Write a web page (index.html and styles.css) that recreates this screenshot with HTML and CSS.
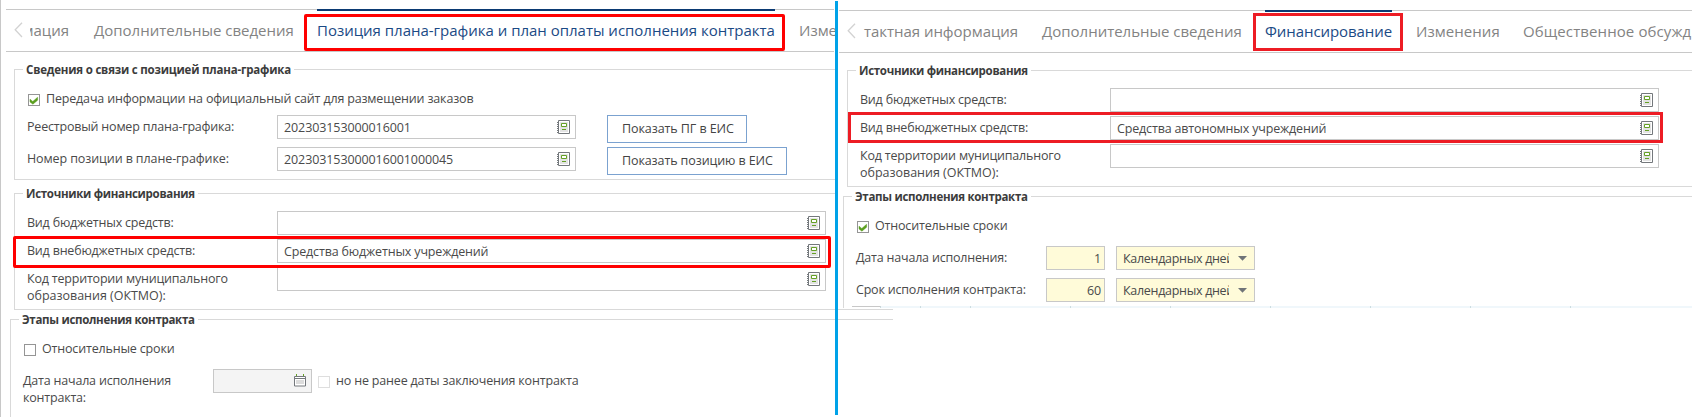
FILE: index.html
```
<!DOCTYPE html>
<html lang="ru">
<head>
<meta charset="utf-8">
<title>Контракт: источники финансирования</title>
<link rel="stylesheet" href="styles.css">
</head>
<body>
<svg class="defs" width="0" height="0" aria-hidden="true">
  <symbol id="book" viewBox="0 0 13 14">
    <path d="M1.5 .5h11v13h-11z" fill="#fff" stroke="#74787c"/>
    <path d="M3 2h8v10H3z" fill="#e3e3e3"/>
    <path d="M0 2h1v1H0zM0 4h1v1H0zM0 6h1v1H0zM0 8h1v1H0zM0 10h1v1H0zM0 12h1v1H0z" fill="#74787c"/>
    <path d="M4.5 3.5h5v3h-5z" fill="#fff" stroke="#64a024"/>
    <path d="M5 9h4v1H5z" fill="#64a024"/>
  </symbol>
  <symbol id="tick" viewBox="0 0 12 12">
    <path d="M2 5.200l2.800 2.300L9.600 3.300v2.900L4.900 10.200 2 7.900z" fill="#5a9e1f" stroke="#5a9e1f" stroke-width=".5"/>
  </symbol>
  <symbol id="back" viewBox="0 0 9 16">
    <path d="M8 .7L1.200 7.800 8 15" fill="none" stroke="#d2d2d2" stroke-width="1.300"/>
  </symbol>
  <symbol id="calendar" viewBox="0 0 12 13">
    <path d="M.5 2.500h11v9.500H.5z" fill="#fff" stroke="#74787c"/>
    <path d="M1 4h10v1H1z" fill="#74787c"/>
    <path d="M2 6h8v4H2z" fill="#dcdcdc"/>
    <path d="M2 0h1v2H2zM9 0h1v2H9z" fill="#64a024"/>
  </symbol>
  <symbol id="caret" viewBox="0 0 9 5"><path d="M0 0h9L4.500 4.800z" fill="#707478"/></symbol>
</svg>

<main class="page">
  <section class="panel panel-left">
    <nav class="tabs">
      <svg class="back"><use href="#back"/></svg>
      <span class="tab tab-cut-start">мация</span>
      <span class="tab tab-details">Дополнительные сведения</span>
      <span class="tab tab-plan tab-active">Позиция плана-графика и план оплаты исполнения контракта<i class="mark mark-tab"></i></span>
      <span class="tab tab-cut-end">Изме</span>
    </nav>

    <fieldset class="group group-plan">
      <legend>Сведения о связи с позицией плана-графика</legend>
      <div class="check-row"><span class="box"><svg><use href="#tick"/></svg></span><span>Передача информации на официальный сайт для размещении заказов</span></div>
      <div class="row row-tall">
        <span class="label">Реестровый номер плана-графика:</span>
        <span class="field field-short num">202303153000016001<svg class="book"><use href="#book"/></svg></span>
        <button class="button">Показать ПГ в ЕИС</button>
      </div>
      <div class="row row-tall">
        <span class="label label-plan-item">Номер позиции в плане-графике:</span>
        <span class="field field-short num">202303153000016001000045<svg class="book"><use href="#book"/></svg></span>
        <button class="button button-wide">Показать позицию в ЕИС</button>
      </div>
    </fieldset>

    <fieldset class="group group-sources">
      <legend>Источники финансирования</legend>
      <div class="row"><span class="label">Вид бюджетных средств:</span><span class="field"><svg class="book"><use href="#book"/></svg></span></div>
      <div class="row"><span class="label">Вид внебюджетных средств:</span><span class="field">Средства бюджетных учреждений<svg class="book"><use href="#book"/></svg></span><i class="mark mark-row"></i></div>
      <div class="row row-last"><span class="label">Код территории муниципального<br><span class="oktmo">образования (ОКТМО):</span></span><span class="field"><svg class="book"><use href="#book"/></svg></span></div>
    </fieldset>

    <fieldset class="group group-stages">
      <legend>Этапы исполнения контракта</legend>
      <div class="check-row"><span class="box"></span><span>Относительные сроки</span></div>
      <div class="row date-row">
        <span class="label">Дата начала исполнения<br>контракта:</span>
        <span class="date"><svg><use href="#calendar"/></svg></span>
        <span class="box box-disabled"></span><span class="note">но не ранее даты заключения контракта</span>
      </div>
    </fieldset>
  </section>

  <div class="divider"></div>

  <section class="panel panel-right">
    <nav class="tabs">
      <svg class="back"><use href="#back"/></svg>
      <span class="tab tab-contact">тактная информация</span>
      <span class="tab tab-details">Дополнительные сведения</span>
      <span class="tab tab-finance tab-active">Финансирование<i class="mark mark-tab"></i></span>
      <span class="tab tab-changes">Изменения</span>
      <span class="tab tab-public">Общественное обсужд</span>
    </nav>

    <fieldset class="group group-sources">
      <legend>Источники финансирования</legend>
      <div class="row"><span class="label">Вид бюджетных средств:</span><span class="field"><svg class="book"><use href="#book"/></svg></span></div>
      <div class="row"><span class="label">Вид внебюджетных средств:</span><span class="field">Средства автономных учреждений<svg class="book"><use href="#book"/></svg></span><i class="mark mark-row"></i></div>
      <div class="row row-last"><span class="label">Код территории муниципального<br><span class="oktmo">образования (ОКТМО):</span></span><span class="field"><svg class="book"><use href="#book"/></svg></span></div>
    </fieldset>

    <fieldset class="group group-stages">
      <legend>Этапы исполнения контракта</legend>
      <div class="check-row"><span class="box"><svg><use href="#tick"/></svg></span><span>Относительные сроки</span></div>
      <div class="row row-tall"><span class="label">Дата начала исполнения:</span><span class="amount">1</span><span class="select"><span class="select-text">Календарных дней</span><svg><use href="#caret"/></svg></span></div>
      <div class="row row-tall"><span class="label">Срок исполнения контракта:</span><span class="amount">60</span><span class="select"><span class="select-text">Календарных дней</span><svg><use href="#caret"/></svg></span></div>
      <div class="grid-head"><i class="g-first"></i><i class="g40"></i><i class="g50"></i><i></i><i></i><i></i><i></i><i></i><i></i></div>
    </fieldset>
    <div class="seam"></div>
  </section>
</main>
</body>
</html>
```
FILE: styles.css
```
* { box-sizing: border-box; }
body {
  margin: 0;
  background: #fff;
  color: #4a4a4a;
  font: 12.5px/17px "Open Sans", "Noto Sans", sans-serif;
  letter-spacing: -0.17px;
}
.defs { position: absolute; }
.page { display: flex; width: 1692px; height: 420px; overflow: hidden; }
.panel { position: relative; flex: none; }
.panel-left { width: 835px; height: 417px; border-left: 1px solid #c8c8c8; }
.panel-right { width: 854px; }
.divider { position: relative; z-index: 1; flex: none; width: 3px; height: 414px; margin-top: 1px; background: #00a2e8; }

/* tabs */
.tabs {
  display: flex;
  height: 43px;
  border: solid #c8c8c8;
  border-width: 1px 0;
  color: #838383;
  font-size: 15px;
  line-height: 20px;
  letter-spacing: -0.01px;
  white-space: nowrap;
}
.panel-left .tabs { margin: 9px 1px 0 5px; padding-left: 8px; }
.panel-right .tabs { margin: 10px 0 0 1px; padding-left: 8px; }
.back { flex: none; width: 9px; height: 16px; margin-top: 12px; }
.tab { position: relative; flex: none; height: 43px; margin-top: -1px; padding-top: 11px; }
.tab-cut-start { display: flex; justify-content: flex-end; width: 39px; margin-left: 7px; overflow: hidden; }
.tab-details { width: 198px; margin-left: 25px; }
.tab-plan { width: 458px; margin-left: 25px; }
.tab-cut-end { width: 36px; margin-left: 24px; overflow: hidden; }
.tab-contact { width: 153px; margin-left: 8px; letter-spacing: -0.04px; }
.tab-finance { width: 127px; margin-left: 25px; letter-spacing: -0.08px; }
.tab-changes { width: 82px; margin-left: 24px; letter-spacing: .05px; }
.tab-public { width: 170px; margin-left: 25px; overflow: hidden; letter-spacing: .1px; }
.tab-active { border-top: 2px solid #0b3a73; padding-top: 9px; color: #1b4a85; }

/* red annotation frames */
.mark { position: absolute; z-index: 2; border: 3px solid #f00; border-radius: 2px; }
.panel-right .mark { border-color: #ed1c24; border-radius: 0; }
.tab-plan .mark { left: -13px; top: 3px; width: 481px; height: 37px; }
.tab-finance .mark { left: -12px; top: 1px; width: 150px; height: 38px; }
.panel-left .mark-row { left: -14px; top: -3px; width: 818px; height: 32px; }
.panel-right .mark-row { left: -12px; top: -4px; width: 815px; height: 31px; }

/* groups */
.group { min-width: 0; margin: 0; padding: 0 0 0 8px; border: 1px solid #d9d9d9; border-right: 0; }
.group legend { height: 17px; padding: 0 3px; color: #3c3c3c; font-size: 11.5px; font-weight: 700; letter-spacing: -0.3px; white-space: nowrap; }
.group-plan legend { letter-spacing: -0.2px; }
.check-row { display: flex; height: 25px; }
.row { position: relative; display: flex; align-items: flex-start; height: 28px; margin-left: 4px; white-space: nowrap; }
.row-tall { height: 32px; }
.row-last { height: 42px; }
.label { flex: none; width: 250px; padding-top: 3px; letter-spacing: -0.2px; }
.label-plan-item { letter-spacing: -0.1px; }
.oktmo { letter-spacing: -0.02px; }
.box { flex: none; width: 12px; height: 12px; margin-top: 4px; border: 1px solid #959595; background: #fff; }
.box svg { display: block; width: 12px; height: 12px; margin: -1px; }
.box-disabled { border-color: #dedede; }
.field, .date, .amount, .select { flex: none; height: 24px; border: 1px solid #c8c8c8; background: #fff; }
.field { position: relative; display: flex; width: 549px; padding: 3px 5px 0 6px; letter-spacing: -0.16px; }
.field-short { width: 299px; }
.num { letter-spacing: -0.1px; }
.book { width: 13px; height: 14px; margin: 1px 0 0 auto; }
.button { width: 140px; height: 28px; margin: 0 0 0 31px; padding: 0 0 1px 14px; border: 1px solid #7ba2d0; background: #fff; color: #444; font: inherit; letter-spacing: -0.08px; text-align: left; }
.button-wide { width: 180px; letter-spacing: -0.1px; }

/* left panel */
.panel-left .group-plan, .panel-left .group-sources { margin-left: 13px; }
.group-plan { height: 119px; margin-top: 9px; }
.group-plan .check-row { margin: 12px 0 0 5px; }
.group-plan .check-row .box { margin-right: 6px; }
.panel-left .group-sources { height: 125px; margin-top: 5px; }
.group-sources .row:nth-of-type(1) { margin-top: 9px; }
.panel-left .group-stages { height: 106px; margin: 1px 0 0 9px; border-bottom: 0; }
.panel-left .group-stages .check-row { height: 29px; margin: 12px 0 0 5px; }
.panel-left .group-stages .box { margin-right: 6px; }
.date-row .label { width: 190px; letter-spacing: -0.2px; }
.date { width: 99px; padding: 4px 0 0 80px; background: #f4f4f4; }
.date svg { display: block; width: 12px; height: 13px; }
.panel-left .group-stages .box-disabled { margin: 7px 6px 0; }
.note { padding-top: 3px; }

/* right panel */
.panel-right .group-sources { height: 125px; margin: 9px 0 0 9px; }
.panel-right .group-stages { height: 120px; margin: 1px 0 0 5px; border-bottom: 0; }
.panel-right .group-stages .check-row { height: 29px; margin: 12px 0 0 5px; }
.panel-right .group-stages .box { margin-right: 6px; }
.panel-right .group-stages .label { width: 190px; }
.amount { width: 59px; padding: 3px 3px 0 0; background: #fffbd9; text-align: right; }
.select { display: flex; width: 139px; margin-left: 11px; padding: 3px 7px 0 6px; background: #fffbd9; }
.select-text { flex: none; width: 106px; overflow: hidden; letter-spacing: -0.3px; white-space: nowrap; }
.select svg { width: 9px; height: 5px; margin: 6px 0 0 auto; }
.grid-head { display: flex; height: 2px; margin: -4px 0 0; background: #f0f7fb; }
.grid-head i { flex: none; width: 100px; border-right: 1px solid #ccdde1; }
.grid-head .g-first { width: 29px; border-top: 1px solid #c8c8c8; background: #fff; }
.grid-head .g40 { width: 40px; }
.grid-head .g50 { width: 50px; }
.seam { width: 55px; height: 11px; margin-top: 1px; border: solid #d9d9d9; border-width: 1px 0; }
```
